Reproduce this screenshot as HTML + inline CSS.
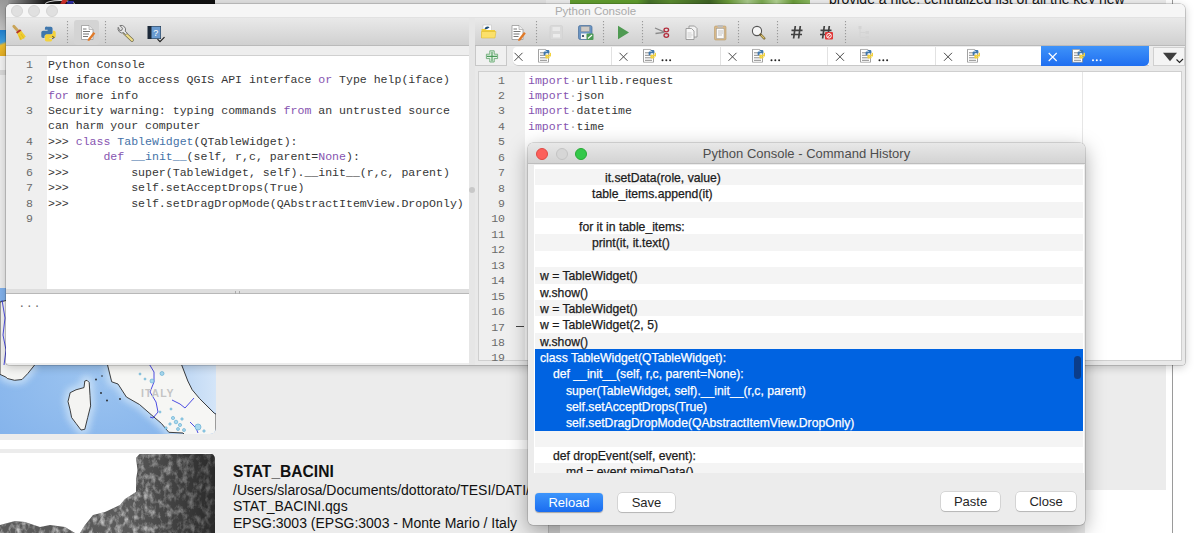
<!DOCTYPE html>
<html><head><meta charset="utf-8">
<style>
*{margin:0;padding:0;box-sizing:border-box}
html,body{width:1200px;height:533px;overflow:hidden;background:#fff;font-family:"Liberation Sans",sans-serif}
.a{position:absolute}
.mono{font-family:"Liberation Mono",monospace}
#bg{left:0;top:0;width:1200px;height:533px;background:#ececec}
#win{left:6px;top:4px;width:1179px;height:361px;background:#ececec;border-radius:5px 5px 3px 3px;box-shadow:0 0 0 .6px rgba(0,0,0,.28),0 2px 10px rgba(0,0,0,.22);overflow:hidden}
#title{left:0;top:0;width:1179px;height:14px;background:#f6f6f6;border-bottom:1px solid #e2e2e2}
.tl{width:12px;height:12px;border-radius:50%;background:#e0e0e0;border:.5px solid #d4d4d4;top:1px}
#tbL{left:0;top:14px;width:463px;height:28px;background:linear-gradient(#e9e9e9,#d0d0d0);border-bottom:1px solid #bababa}
#tbR{left:469px;top:14px;width:710px;height:28px;background:linear-gradient(#e9e9e9,#d0d0d0);border-bottom:1px solid #bababa}
.sep{width:1px;top:4px;height:20px;border-left:2px dotted #8a8a8a}
.code{font-size:11.55px;line-height:15.43px;color:#363636;white-space:pre}
.kw{color:#8654b0}
.bl{color:#4572a8}
.ln{font-size:11.55px;line-height:15.43px;color:#6a6a6a;white-space:pre;text-align:right}
.hist{font-size:12.2px;color:#1b1b1b;-webkit-text-stroke:.25px currentColor}
.row{width:548px;height:16.36px;line-height:16.36px;padding-top:1px;white-space:pre}
.g{background:#f4f4f4}
.w{background:#fff}
.s{background:#0063e1;color:#fff}
.btn{height:19px;border-radius:4px;background:#fff;box-shadow:0 0 0 .5px rgba(0,0,0,.18),0 1px 1px rgba(0,0,0,.15);font-size:13px;line-height:19px;text-align:center;color:#262626}
</style></head><body>
<div id="bg" class="a">
  <!-- top strip of background -->
  <div class="a" style="left:0;top:0;width:215px;height:8px;background:linear-gradient(90deg,#b0b0b0,#151515 22%,#111)"></div>
  <div class="a" style="left:45px;top:0;width:30px;height:8px;border-radius:50%;border:1px solid #ddd;border-bottom:none"></div>
  <div class="a" style="left:61px;top:0;width:5px;height:5px;background:#d0302a;transform:skewX(-30deg)"></div>
  <div class="a" style="left:67px;top:1px;width:6px;height:4px;background:#2a2aa0;transform:skewX(-30deg)"></div>
  <div class="a" style="left:215px;top:0;width:331px;height:8px;background:#e0e0e0"></div>
  <div class="a" style="left:546px;top:0;width:24px;height:8px;background:#eaeaea"></div>
  <div class="a" style="left:570px;top:0;width:240px;height:8px;background:linear-gradient(90deg,#629c30,#5e9a2c 28%,#46702a 33%,#5a8a30 42%,#3e6224 58%,#6a9a3a 66%,#a8c88a 74%,#7aa850 80%,#b0d090 86%,#6a9c3a 93%,#8ab860)"></div>
  <!-- left strip -->
  <div class="a" style="left:0;top:0;width:8px;height:30px;background:linear-gradient(#999,#c4c4c4)"></div>
  <div class="a" style="left:0;top:30px;width:8px;height:26px;background:linear-gradient(160deg,#1f7fd0 0%,#40a0e0 45%,#f0c030 55%,#e0a820 100%)"></div>
  <div class="a" style="left:0;top:56px;width:8px;height:16px;background:#f2f2f2"></div>
  <div class="a" style="left:0;top:70px;width:8px;height:5px;background:#d8d8d8"></div>
  <div class="a" style="left:1166px;top:0;width:6px;height:533px;background:#fff"></div>
  <div class="a" style="left:1172px;top:0;width:1px;height:533px;background:#9a9a9a"></div>
  <div class="a" style="left:1173px;top:0;width:27px;height:533px;background:#fff"></div>
  <div class="a" style="left:0;top:440px;width:1166px;height:9px;background:#fff"></div>
  <div class="a" style="left:1085px;top:490px;width:87px;height:43px;background:#fff"></div>
  <div class="a" style="left:548px;top:500px;width:12px;height:33px;background:#d4d4d4;border-left:1px solid #bbb"></div>
  <div class="a" style="left:1085px;top:365px;width:81px;height:125px;background:#ececec;border-radius:0 0 6px 0"></div>
  <!-- map -->
  <svg class="a" style="left:0;top:288px" width="216" height="148" viewBox="0 288 216 148">
   <defs>
    <radialGradient id="sea" cx="0.45" cy="0.6" r="0.8"><stop offset="0" stop-color="#9cc4f0"/><stop offset="1" stop-color="#7daeea"/></radialGradient>
    <linearGradient id="sea2" x1="0" y1="0" x2="1" y2="0"><stop offset="0" stop-color="#bcd6f4"/><stop offset="1" stop-color="#d4e5f8"/></linearGradient>
    <filter id="mblur" x="-20%" y="-20%" width="140%" height="140%"><feGaussianBlur stdDeviation="3"/></filter>
    <clipPath id="mclip"><path d="M0 288 H216 V428 a6 6 0 0 1 -6 6 H0 Z"/></clipPath>
   </defs>
   <g clip-path="url(#mclip)">
    <rect x="0" y="288" width="216" height="148" fill="url(#sea)"/>
    <path d="M180 360 L188 381 L192 390 L200 399 L216 414 V360 Z" fill="url(#sea2)"/>
    <g fill="none" stroke="#cfe4f8" stroke-width="9" opacity=".75" filter="url(#mblur)">
     <path d="M87 380.3 L89.2 382.5 L90 395.6 L90.6 405.9 L87.7 417.5 L84.8 429.3 L81 430 L76 423.4 L71.6 417.5 L70.2 410.2 L68 401.5 L70.2 392.7 L76 389.8 L84 387.6 L84.8 381 Z"/>
     <path d="M107.3 364 L111.7 381.8 L118 384 L126.4 397 L139.5 404.5 L151.2 414.7 L161.5 423.5 L168.8 432.3 L183 433"/>
     <path d="M0 374.4 L5.8 377 L7.3 378.5 L14.6 380.3 L22 379.5 L27.8 373.5 L35 364.5"/>
    </g>

    <path d="M0 302 L8 300 L20 296 L30 290 L40 288 L40 360 L35 364.5 L27.8 373.5 L22 379.5 L14.6 380.3 L7.3 378.5 L5.8 377 L0 374.4 Z" fill="#f4f4f2" stroke="#2a2a2a" stroke-width=".9"/>
    <path d="M87 380.3 L89.2 382.5 L90 395.6 L90.6 405.9 L87.7 417.5 L84.8 429.3 L81 430 L76 423.4 L71.6 417.5 L70.2 410.2 L68 401.5 L70.2 392.7 L76 389.8 L84 387.6 L84.8 381 Z" fill="#f4f4f2" stroke="#2a2a2a" stroke-width=".9"/>
    <path d="M106 360 L107.3 364 L111.7 381.8 L118 384 L126.4 397 L139.5 404.5 L151.2 414.7 L161.5 423.5 L168.8 432.3 L183 433 L190 440 H216 V414 L214.2 413.2 L199.6 398.6 L192.2 389.8 L187.8 381 L181.3 364 L180 360 Z" fill="#f6f6f4" stroke="#2a2a2a" stroke-width=".9"/>
    <path d="M2 300 L5 318 L3 335 L6 350 L4 365" fill="none" stroke="#3a3ae0" stroke-width=".9"/>
    <path d="M148 362 L154 372 L154 382 L150 392 L156 402 L158 412 L153 418 L150 417" fill="none" stroke="#3a3ae0" stroke-width=".9"/>
    <path d="M172 400 L180 404 L185 408 L194 398" fill="none" stroke="#3a3ae0" stroke-width=".9"/>
    <path d="M190 422 L196 428 L198 433" fill="none" stroke="#3a3ae0" stroke-width=".9"/>
    <text x="141" y="397" font-size="10.5" font-weight="bold" font-family="Liberation Sans" fill="#c4c4c4" letter-spacing="1">ITALY</text>
    <g fill="#a8d8ee" stroke="#5aaad0" stroke-width=".6">
     <circle cx="162" cy="373.5" r="2"/><circle cx="152" cy="381" r="2"/><circle cx="198" cy="427" r="3"/>
     <circle cx="173" cy="418" r="1.6"/><circle cx="176" cy="422" r="1.8"/><circle cx="180" cy="425" r="1.6"/><circle cx="178" cy="429" r="1.5"/><circle cx="184" cy="430" r="1.5"/><circle cx="170" cy="424" r="1.2"/><circle cx="166" cy="428" r="1.2"/><circle cx="182" cy="419" r="1.2"/><circle cx="204" cy="431" r="1.2"/>
     <circle cx="140" cy="374" r="1"/><circle cx="145" cy="379" r="1"/><circle cx="160" cy="412" r="1"/><circle cx="171" cy="409" r="1"/>
    </g>
    <g fill="#222"><circle cx="96" cy="379.5" r=".9"/><circle cx="101" cy="393" r=".9"/><circle cx="107" cy="400.5" r=".9"/><circle cx="102" cy="376" r=".8"/><circle cx="120" cy="399" r=".9"/></g>
   </g>
  </svg>
  <!-- raster -->
  <svg class="a" style="left:0;top:453px" width="216" height="80" viewBox="0 453 216 80">
   <defs>
    <linearGradient id="ras" x1="0" y1="0" x2="1" y2="0"><stop offset="0" stop-color="#000" stop-opacity="0"/><stop offset=".6" stop-color="#000" stop-opacity="0"/><stop offset="1" stop-color="#000" stop-opacity=".55"/></linearGradient>
    <clipPath id="rclip"><path d="M0 453 H209 a6 6 0 0 1 6 6 V533 H0 Z"/></clipPath>
    <clipPath id="rshape"><path d="M139.5 454 H216 V533 H80 L85 525 L93 515 L105 512 L120 505 L125 499 L136 492 L136 480 L137.5 470 L136 458 Z M0 525 L15 521 L25 522 L40 527 L50 525 L65 527 L75 533 H0 Z"/></clipPath>
    <filter id="tex" x="0" y="0" width="1" height="1" color-interpolation-filters="sRGB">
     <feTurbulence type="fractalNoise" baseFrequency="0.18 0.12" numOctaves="4" seed="11"/>
     <feColorMatrix type="matrix" values="0 0 0 0 0.82  0 0 0 0 0.82  0 0 0 0 0.82  2.4 0 0 0 -1.0"/>
     <feComposite in2="SourceGraphic" operator="in"/>
    </filter>
   </defs>
   <g clip-path="url(#rclip)">
    <rect x="0" y="453" width="216" height="80" fill="#fff"/>
    <g clip-path="url(#rshape)">
     <rect x="0" y="453" width="216" height="80" fill="#5a5a5a"/>
     <rect x="0" y="453" width="216" height="80" fill="#d0d0d0" filter="url(#tex)" opacity=".9"/>
     <rect x="0" y="453" width="216" height="80" fill="url(#ras)"/>
    </g>
   </g>
  </svg>
  <div class="a" style="left:233px;top:463px;font-size:15.6px;font-weight:bold;color:#111">STAT_BACINI</div>
  <div class="a" style="left:233px;top:482px;font-size:14px;line-height:16.3px;color:#111;white-space:pre">/Users/slarosa/Documents/dottorato/TESI/DATI/
STAT_BACINI.qgs
EPSG:3003 (EPSG:3003 - Monte Mario / Italy</div>
  <div class="a" style="left:829px;top:-9px;font-size:14px;color:#111;white-space:pre">provide a nice, centralized list of all the key new</div>
</div>

<div id="win" class="a">
  <div id="title" class="a">
    <div class="a tl" style="left:5px"></div>
    <div class="a tl" style="left:22px"></div>
    <div class="a tl" style="left:39.5px"></div>
    <div class="a" style="left:0;width:1179px;top:0;text-align:center;font-size:11.5px;line-height:14px;color:#ababab">Python Console</div>
  </div>
  <!-- left toolbar -->
  <div id="tbL" class="a">
    <div class="a" style="left:68px;top:2px;width:25px;height:25px;background:#d4d4d4;border-radius:3px"></div>
  </div>
  <div class="a" style="left:0;top:42px;width:463px;height:10px;background:#eeeeee;border-bottom:1px solid #d0d0d0"></div>
  <!-- left editor -->
  <div class="a" style="left:0;top:52px;width:463px;height:233px;background:#fff">
    <div class="a" style="left:0;top:0;width:41px;height:233px;background:#efefef"></div>
  </div>
  <div class="a ln mono" style="left:0;top:52.7px;width:27px;padding-top:0">1
2

3

4
5
6
7
8
9</div>
  <div class="a code mono" style="left:42px;top:52.7px">Python Console
Use iface to access QGIS API interface <span class="kw">or</span> Type help(iface)
<span class="kw">for</span> more info
Security warning: typing commands <span class="kw">from</span> an untrusted source
can harm your computer
&gt;&gt;&gt; <span class="kw">class</span> <span class="bl">TableWidget</span>(QTableWidget):
&gt;&gt;&gt;     <span class="kw">def</span> <span class="bl">__init__</span>(self, r,c, parent=<span class="kw">None</span>):
&gt;&gt;&gt;         super(TableWidget, self).__init__(r,c, parent)
&gt;&gt;&gt;         self.setAcceptDrops(True)
&gt;&gt;&gt;         self.setDragDropMode(QAbstractItemView.DropOnly)
</div>
  <!-- splitter -->
  <div class="a" style="left:0;top:285px;width:463px;height:5px;background:#dedede;border-bottom:1px solid #b8b8b8"></div>
  <div class="a" style="left:0;top:290px;width:463px;height:69px;background:#fff"></div>
  <div class="a mono" style="left:12.5px;top:293.5px;font-size:11px;color:#666;letter-spacing:1px">...</div>
  <div class="a" style="left:229px;top:286.5px;width:5px;height:3px;border-left:1.5px solid #aaa;border-right:1.5px solid #aaa"></div>
  <!-- vertical splitter -->
  <div class="a" style="left:463px;top:14px;width:6px;height:347px;background:#e6e6e6"></div>

  <!-- right toolbar -->
  <div id="tbR" class="a">
  </div>
  <!-- tabs -->
  <div class="a" style="left:469px;top:42px;width:32px;height:20px;background:#f0f0f0;border:1px solid #c8c8c8;border-top:none"></div>
  <div class="a" style="left:507px;top:42.5px;width:636px;height:19px;background:#fff;border-radius:4px 0 0 5px;border-bottom:1px solid #c8c8c8"></div>
  <div class="a" style="left:1035px;top:42px;width:108px;height:20px;background:linear-gradient(#3f93f9,#1f6ef0);border-radius:0 0 5px 0"></div>
  <div class="a" style="left:1147px;top:43px;width:32px;height:19px;background:#f4f4f4;border:1px solid #d0d0d0"></div>
  <!-- right editor -->
  <div class="a" style="left:469px;top:62px;width:710px;height:299px;background:#e9e9e9"></div>
  <div class="a" style="left:472px;top:67px;width:704px;height:290px;background:#fff;border:1px solid #cfcfcf"></div>
  <div class="a" style="left:473px;top:68px;width:46px;height:288px;background:#efefef"></div>
  <div class="a ln mono" style="left:473px;top:68.5px;width:26px">1
2
3
4
5
6
7
8
9
10
11
12
13
14
15
16
17
18
19</div>
  <div class="a code mono" style="left:522px;top:68.5px"><span class="kw">import</span><span style="color:#9a9a9a">·</span>urllib.request
<span class="kw">import</span><span style="color:#9a9a9a">·</span>json
<span class="kw">import</span><span style="color:#9a9a9a">·</span>datetime
<span class="kw">import</span><span style="color:#9a9a9a">·</span>time</div>
  <div class="a" style="left:1076px;top:68px;width:1px;height:288px;background:#e6e6e6"></div>
  <div class="a" style="left:510px;top:322px;width:8px;height:1.3px;background:#444"></div>
  <div class="a" style="left:463px;top:183px;width:6px;height:6px;border-radius:50%;background:#c8c8c8"></div>
</div>


<svg class="a" style="left:0;top:0" width="1200" height="72">
 <defs>
  <linearGradient id="yel" x1="0" y1="0" x2="0" y2="1"><stop offset="0" stop-color="#fbe27a"/><stop offset="1" stop-color="#e8c12a"/></linearGradient>
  <linearGradient id="fold" x1="0" y1="0" x2="0" y2="1"><stop offset="0" stop-color="#fde98b"/><stop offset="1" stop-color="#f1cf3c"/></linearGradient>
 </defs>
 <!-- broom -->
 <g>
  <path d="M13.8 26.3 L17.8 30.8" stroke="#c9a458" stroke-width="2.8" stroke-linecap="round"/>
  <path d="M16 32.2 L20 29.2 L21.6 31 L17.6 34 Z" fill="#b5302a"/>
  <path d="M17.2 33.6 L21.2 30.8 L25.8 36.6 L23.5 38.6 L20 40.2 Z" fill="#efcd30"/>
  <path d="M19 35.5 L21.2 39.8 M21 34 L24 38.6" stroke="#d5ab1c" stroke-width=".6"/>
 </g>
 <!-- python logo -->
 <g>
<g transform="translate(48.5 33) scale(.9) translate(-48.5 -33)">
  <path d="M47 26 h4 a2 2 0 0 1 2 2 v5 a2 2 0 0 1 -2 2 h-5 a2 2 0 0 0 -2 2 v1.5 h-1.5 a2 2 0 0 1 -2 -2 v-4 a2 2 0 0 1 2 -2 h5 v-1 h-3 v-1.5 a2 2 0 0 1 2.5 -2 z" fill="#3f77ad"/>
  <path d="M53.5 30.5 h1 a2 2 0 0 1 2 2 v4 a2 2 0 0 1 -2 2 h-5 v1 h3 v1.2 a2 2 0 0 1 -2 1.8 h-4 a2 2 0 0 1 -2 -2 v-4 a2 2 0 0 1 2 -2 h5 a2 2 0 0 0 2 -2 z" fill="#f3d23c"/>
  <path d="M52.5 36.5 l2.5 1.5 l-2.5 1.5" stroke="#444" stroke-width="1" fill="none"/>
 </g></g>
 <!-- pressed doc -->
 <g>
  <path d="M81.5 25.5 h7.5 l4 4 v10 h-11.5 z" fill="#fff" stroke="#9a9a9a" stroke-width=".8"/>
  <path d="M89 25.5 v4 h4" fill="#e9e9e9" stroke="#9a9a9a" stroke-width=".6"/>
  <path d="M83 29 h3.5 M83 31.5 h7 M83 34 h6 M83 36.5 h5" stroke="#777" stroke-width="1"/>
  <path d="M88 39 l5.5 -7 l1.8 1.5 l-5.5 7 l-2.2 .6 z" fill="#e07a2a"/>
 </g>
 <!-- wrench -->
 <g>
  <path d="M124.5 33 L132 40" stroke="#6f6a4a" stroke-width="3.6" stroke-linecap="round"/>
  <path d="M124.5 33 L132 40" stroke="#f0df8a" stroke-width="2.2" stroke-linecap="round"/>
  <path d="M118.2 27.3 a4.3 4.3 0 0 0 5.6 5.4 l2 2 l1.5 -1.5 l-2 -2 a4.3 4.3 0 0 0 -5.4 -5.6 l2.6 2.6 l-.6 2 l-2 .6 z" fill="#e8e8e8" stroke="#6a6a6a" stroke-width=".9"/>
 </g>
 <!-- help book -->
 <g>
  <rect x="147.5" y="26" width="13.5" height="13" fill="#1d2a3a"/>
  <rect x="151.5" y="26.5" width="9" height="12" fill="#6a9bd0"/>
  <text x="153.3" y="35.5" font-size="9" font-family="Liberation Sans" fill="#fff">?</text>
  <path d="M157.5 39.2 l2.5 2.5 l4.5 -4.5" stroke="#222" stroke-width="1.2" fill="none"/>
 </g>
 <!-- open folder -->
 <g>
  <rect x="483" y="25" width="8.5" height="6" fill="#fff" stroke="#bbb" stroke-width=".5"/>
  <path d="M484.5 29.5 c0 -3 4 -4 5 -2 l-2.5 1.5 z" fill="#1f4f78"/>
  <path d="M481.5 29 h4 l1 1 h8.5 v8 h-13.5 z" fill="#f2cf3a"/>
  <path d="M481.5 31.5 h14.5 l-1 6.5 h-13.5 z" fill="#fbe06a" stroke="#d9b52a" stroke-width=".5"/>
 </g>
 <!-- new doc with pencil -->
 <g>
  <path d="M512 25.5 h7 l4 4 v10 h-11 z" fill="#fff" stroke="#999" stroke-width=".8"/>
  <path d="M519 25.5 v4 h4" fill="#eee" stroke="#999" stroke-width=".6"/>
  <path d="M513.5 29 h3.5 M513.5 31.5 h7 M513.5 34 h6 M513.5 36.5 h5" stroke="#777" stroke-width="1"/>
  <path d="M518.5 39 l5.5 -7 l1.8 1.5 l-5.5 7 l-2.2 .6 z" fill="#e07a2a"/>
 </g>
 <!-- save disabled -->
 <g>
  <rect x="550" y="25.5" width="12.5" height="14" rx="1.5" fill="#d9d9d9" stroke="#cfcfcf" stroke-width=".6"/>
  <rect x="552.5" y="27" width="7.5" height="4" fill="#e9e9e9"/>
  <rect x="553" y="34" width="7" height="3.5" fill="#ececec"/>
 </g>
 <!-- save as -->
 <g>
  <rect x="578.5" y="25.5" width="13.5" height="14" rx="1.8" fill="#6a95c4" stroke="#466c98" stroke-width=".7"/>
  <rect x="581" y="26.5" width="8.5" height="5" fill="#cfcac4" stroke="#8a8a8a" stroke-width=".4"/>
  <rect x="581" y="33.5" width="8" height="5.5" fill="#f4f4f4"/>
  <circle cx="583" cy="36" r="1.1" fill="#1f3550"/>
  <rect x="586.5" y="33.5" width="7" height="6.5" rx="1" fill="#4a9a55"/>
  <path d="M588 38.5 l4 -3.5" stroke="#fff" stroke-width="1.1"/>
 </g>
 <!-- run -->
 <path d="M618 25.8 L629 32.5 L618 39.2 Z" fill="#4f9a52"/>
 <!-- scissors -->
 <g>
  <path d="M655 28 L664.5 32.2 M655.5 33.5 L664.5 32.3" stroke="#8a8a8a" stroke-width="1.3"/>
  <ellipse cx="666.3" cy="30" rx="2.3" ry="1.8" fill="none" stroke="#b22b3a" stroke-width="1.3"/>
  <ellipse cx="666.3" cy="35.5" rx="2.3" ry="1.8" fill="none" stroke="#b22b3a" stroke-width="1.3"/>
 </g>
 <!-- copy -->
 <g>
  <path d="M689 26 h5.5 l2.5 2.5 v8.5 h-8 z" fill="#f2f2f2" stroke="#8d8d8d" stroke-width=".8"/>
  <path d="M686 28.5 h5.5 l2.5 2.5 v8.5 h-8 z" fill="#f7f7f7" stroke="#8d8d8d" stroke-width=".8"/>
  <path d="M687.5 33 h4 M687.5 35 h5 M687.5 37 h4" stroke="#bbb" stroke-width=".7"/>
 </g>
 <!-- paste -->
 <g>
  <rect x="714.5" y="26" width="11.5" height="14" rx="1.2" fill="#d8b889" stroke="#b99a68" stroke-width=".6"/>
  <rect x="716.5" y="28.5" width="7.5" height="10" fill="#fafafa" stroke="#999" stroke-width=".5"/>
  <rect x="717.5" y="25" width="5.5" height="2.5" rx=".8" fill="#bdbdbd"/>
  <path d="M718 31 h5 M718 33 h5 M718 35 h4" stroke="#aaa" stroke-width=".7"/>
 </g>
 <!-- magnifier -->
 <g>
  <circle cx="757" cy="31" r="4.6" fill="#f6f6f6" stroke="#555" stroke-width="1.1"/>
  <path d="M760.5 34.5 L764.2 38.3" stroke="#6a5a2a" stroke-width="2.4" stroke-linecap="round"/>
  <path d="M761.5 35.5 L764 38" stroke="#d8c070" stroke-width="1.3" stroke-linecap="round"/>
 </g>
 <!-- hash -->
 <path d="M795.3 26 L793.6 38.5 M800.3 26 L798.6 38.5 M791.5 30.3 H802.5 M791 34.5 H802" stroke="#404040" stroke-width="1.7"/>
 <g>
  <path d="M824.3 26 L822.6 38.5 M829.3 26 L827.6 38.5 M820.5 30.3 H831.5 M820 34.5 H831" stroke="#404040" stroke-width="1.7"/>
  <rect x="825" y="32" width="8" height="7.5" rx="1" fill="#e03838"/>
  <circle cx="829" cy="35.8" r="2.3" fill="none" stroke="#fff" stroke-width="1"/>
  <path d="M827.4 37.4 L830.6 34.2" stroke="#fff" stroke-width="1"/>
 </g>
 <!-- tree disabled -->
 <g fill="#d4d4d4" stroke="none">
  <rect x="858.5" y="26" width="3" height="3"/>
  <rect x="865.5" y="31" width="3.5" height="3"/>
  <rect x="865.5" y="36" width="3.5" height="3"/>
  <path d="M860 29 v8.5 h5.5 M860 32.5 h5.5" stroke="#d4d4d4" stroke-width="1" fill="none"/>
 </g>

 <symbol id="pydoc" viewBox="0 0 13 14">
  <path d="M.5 .5 h7 l3 3 v10 h-10 z" fill="#fff" stroke="#8a8a8a" stroke-width=".8"/>
  <path d="M2 4 h4 M2 6.5 h7 M2 9 h7 M2 11.5 h7" stroke="#8a8a8a" stroke-width="1"/>
  <path d="M8 1.2 h2.2 a1.2 1.2 0 0 1 1.2 1.2 v2 h-3 a1 1 0 0 0 -1 1 v1 h-.8 a1 1 0 0 1 -1 -1 v-1.8 a1 1 0 0 1 1 -1 h2.6 v-.5 h-2 z" fill="#3f77ad"/>
  <path d="M11.6 4 h.6 a1 1 0 0 1 1 1 v1.8 a1 1 0 0 1 -1 1 h-2.6 v.5 h2 v.5 a1.2 1.2 0 0 1 -1.2 1 h-2 a1 1 0 0 1 -1 -1 v-1.8 a1 1 0 0 1 1 -1 h2.6 a.6 .6 0 0 0 .6 -.6 z" fill="#f3d23c"/>
 </symbol>
 <g stroke="#9a9a9a" stroke-width="1.1" stroke-dasharray="1.3 1.7">
  <path d="M67.5 21 V43"/><path d="M105.5 21 V43"/>
  <path d="M536.5 21 V43"/><path d="M603.5 21 V43"/><path d="M642.5 21 V43"/>
  <path d="M738.5 21 V43"/><path d="M777.5 21 V43"/><path d="M845.5 21 V43"/>
 </g>
 <g stroke="#4a4a4a" stroke-width="1">
  <path d="M514.5 52.8 l8 8 M522.5 52.8 l-8 8"/>
  <path d="M619.5 52.8 l8 8 M627.5 52.8 l-8 8"/>
  <path d="M728.5 52.8 l8 8 M736.5 52.8 l-8 8"/>
  <path d="M836 52.8 l8 8 M844 52.8 l-8 8"/>
  <path d="M944 52.8 l8 8 M952 52.8 l-8 8"/>
 </g>
 <path d="M1048.7 53 l8 8 M1056.7 53 l-8 8" stroke="#fff" stroke-width="1.1"/>
 <use href="#pydoc" x="538" y="48.8" width="13" height="14"/>
 <use href="#pydoc" x="643" y="48.8" width="13" height="14"/>
 <use href="#pydoc" x="752" y="48.8" width="13" height="14"/>
 <use href="#pydoc" x="860" y="48.8" width="13" height="14"/>
 <use href="#pydoc" x="967" y="48.8" width="13" height="14"/>
 <use href="#pydoc" x="1072" y="48.8" width="13" height="14"/>
 <g fill="#222">
  <circle cx="662.5" cy="60.3" r="1"/><circle cx="666.3" cy="60.3" r="1"/><circle cx="670.1" cy="60.3" r="1"/>
  <circle cx="771.5" cy="60.3" r="1"/><circle cx="775.3" cy="60.3" r="1"/><circle cx="779.1" cy="60.3" r="1"/>
  <circle cx="879.5" cy="60.3" r="1"/><circle cx="883.3" cy="60.3" r="1"/><circle cx="887.1" cy="60.3" r="1"/>
 </g>
 <g fill="#fff">
  <circle cx="1093" cy="60.3" r="1"/><circle cx="1096.8" cy="60.3" r="1"/><circle cx="1100.6" cy="60.3" r="1"/>
 </g>
 <g stroke="#e2e2e2" stroke-width="1">
  <path d="M611.5 47 V65"/><path d="M720.5 47 V65"/><path d="M827.5 47 V65"/><path d="M935.5 47 V65"/>
 </g>
 <path d="M1163 52.8 h14 l-7 8.5 z" fill="#3e3e3e"/>
 <path d="M1176.5 59.5 l3 3 l3.5 -3.5" stroke="#222" stroke-width="1.1" fill="none"/>
 <!-- plus -->
 <g>
  <path d="M489.8 50.8 h4.4 v3.4 h3.4 v4.4 h-3.4 v3.4 h-4.4 v-3.4 h-3.4 v-4.4 h3.4 z" fill="#e4f2e6" stroke="#6aaa74" stroke-width=".9"/>
  <path d="M492 51.8 v9.4 M487 56.4 h10" stroke="#4a9a58" stroke-width="1.1"/>
 </g>
</svg>

<!-- command history dialog -->
<div id="dlg" class="a" style="left:528px;top:143px;width:557px;height:382px;background:#ececec;border-radius:5px;box-shadow:0 0 0 .5px rgba(0,0,0,.25),0 6px 20px rgba(0,0,0,.35);overflow:hidden">
  <div class="a" style="left:0;top:0;width:557px;height:21px;background:linear-gradient(#e8e8e8,#d3d3d3);border-bottom:1px solid #bdbdbd"></div>
  <div class="a" style="left:8px;top:5px;width:12px;height:12px;border-radius:50%;background:#fc605b;border:.5px solid #de4a45"></div>
  <div class="a" style="left:28px;top:5px;width:12px;height:12px;border-radius:50%;background:#d6d6d6;border:.5px solid #c3c3c3"></div>
  <div class="a" style="left:47px;top:5px;width:12px;height:12px;border-radius:50%;background:#34c84a;border:.5px solid #27aa35"></div>
  <div class="a" style="left:0;top:0;width:557px;text-align:center;font-size:13px;line-height:22px;color:#4d4d4d">Python Console - Command History</div>
  <div class="a" style="left:6px;top:22px;width:550px;height:308px;background:#fff;overflow:hidden">
    <div class="a hist" style="left:1px;top:4px;width:549px">
      <div class="row g" style="padding-left:70px">it.setData(role, value)</div>
      <div class="row w" style="padding-left:57px">table_items.append(it)</div>
      <div class="row g"></div>
      <div class="row w" style="padding-left:44px">for it in table_items:</div>
      <div class="row g" style="padding-left:57px">print(it, it.text()</div>
      <div class="row w"></div>
      <div class="row g" style="padding-left:5px">w = TableWidget()</div>
      <div class="row w" style="padding-left:5px">w.show()</div>
      <div class="row g" style="padding-left:5px">w = TableWidget()</div>
      <div class="row w" style="padding-left:5px">w = TableWidget(2, 5)</div>
      <div class="row g" style="padding-left:5px">w.show()</div>
      <div class="row s" style="padding-left:5px">class TableWidget(QTableWidget):</div>
      <div class="row s" style="padding-left:18px">def __init__(self, r,c, parent=None):</div>
      <div class="row s" style="padding-left:31px">super(TableWidget, self).__init__(r,c, parent)</div>
      <div class="row s" style="padding-left:31px">self.setAcceptDrops(True)</div>
      <div class="row s" style="padding-left:31px">self.setDragDropMode(QAbstractItemView.DropOnly)</div>
      <div class="row g"></div>
      <div class="row w" style="padding-left:18px">def dropEvent(self, event):</div>
      <div class="row g" style="padding-left:31px">md = event.mimeData()</div>
    </div>
    <div class="a" style="left:540px;top:191px;width:7px;height:23px;border-radius:4px;background:#0b3d8a"></div>
  </div>
  <div class="a btn" style="left:7px;top:350px;width:68px;background:linear-gradient(#3d95fb,#1a6cf0);color:#fff;box-shadow:0 .5px 1px rgba(0,0,0,.3)">Reload</div>
  <div class="a btn" style="left:90px;top:350px;width:57px">Save</div>
  <div class="a btn" style="left:413px;top:349px;width:59px">Paste</div>
  <div class="a btn" style="left:488px;top:349px;width:60px">Close</div>
</div>
</body></html>
